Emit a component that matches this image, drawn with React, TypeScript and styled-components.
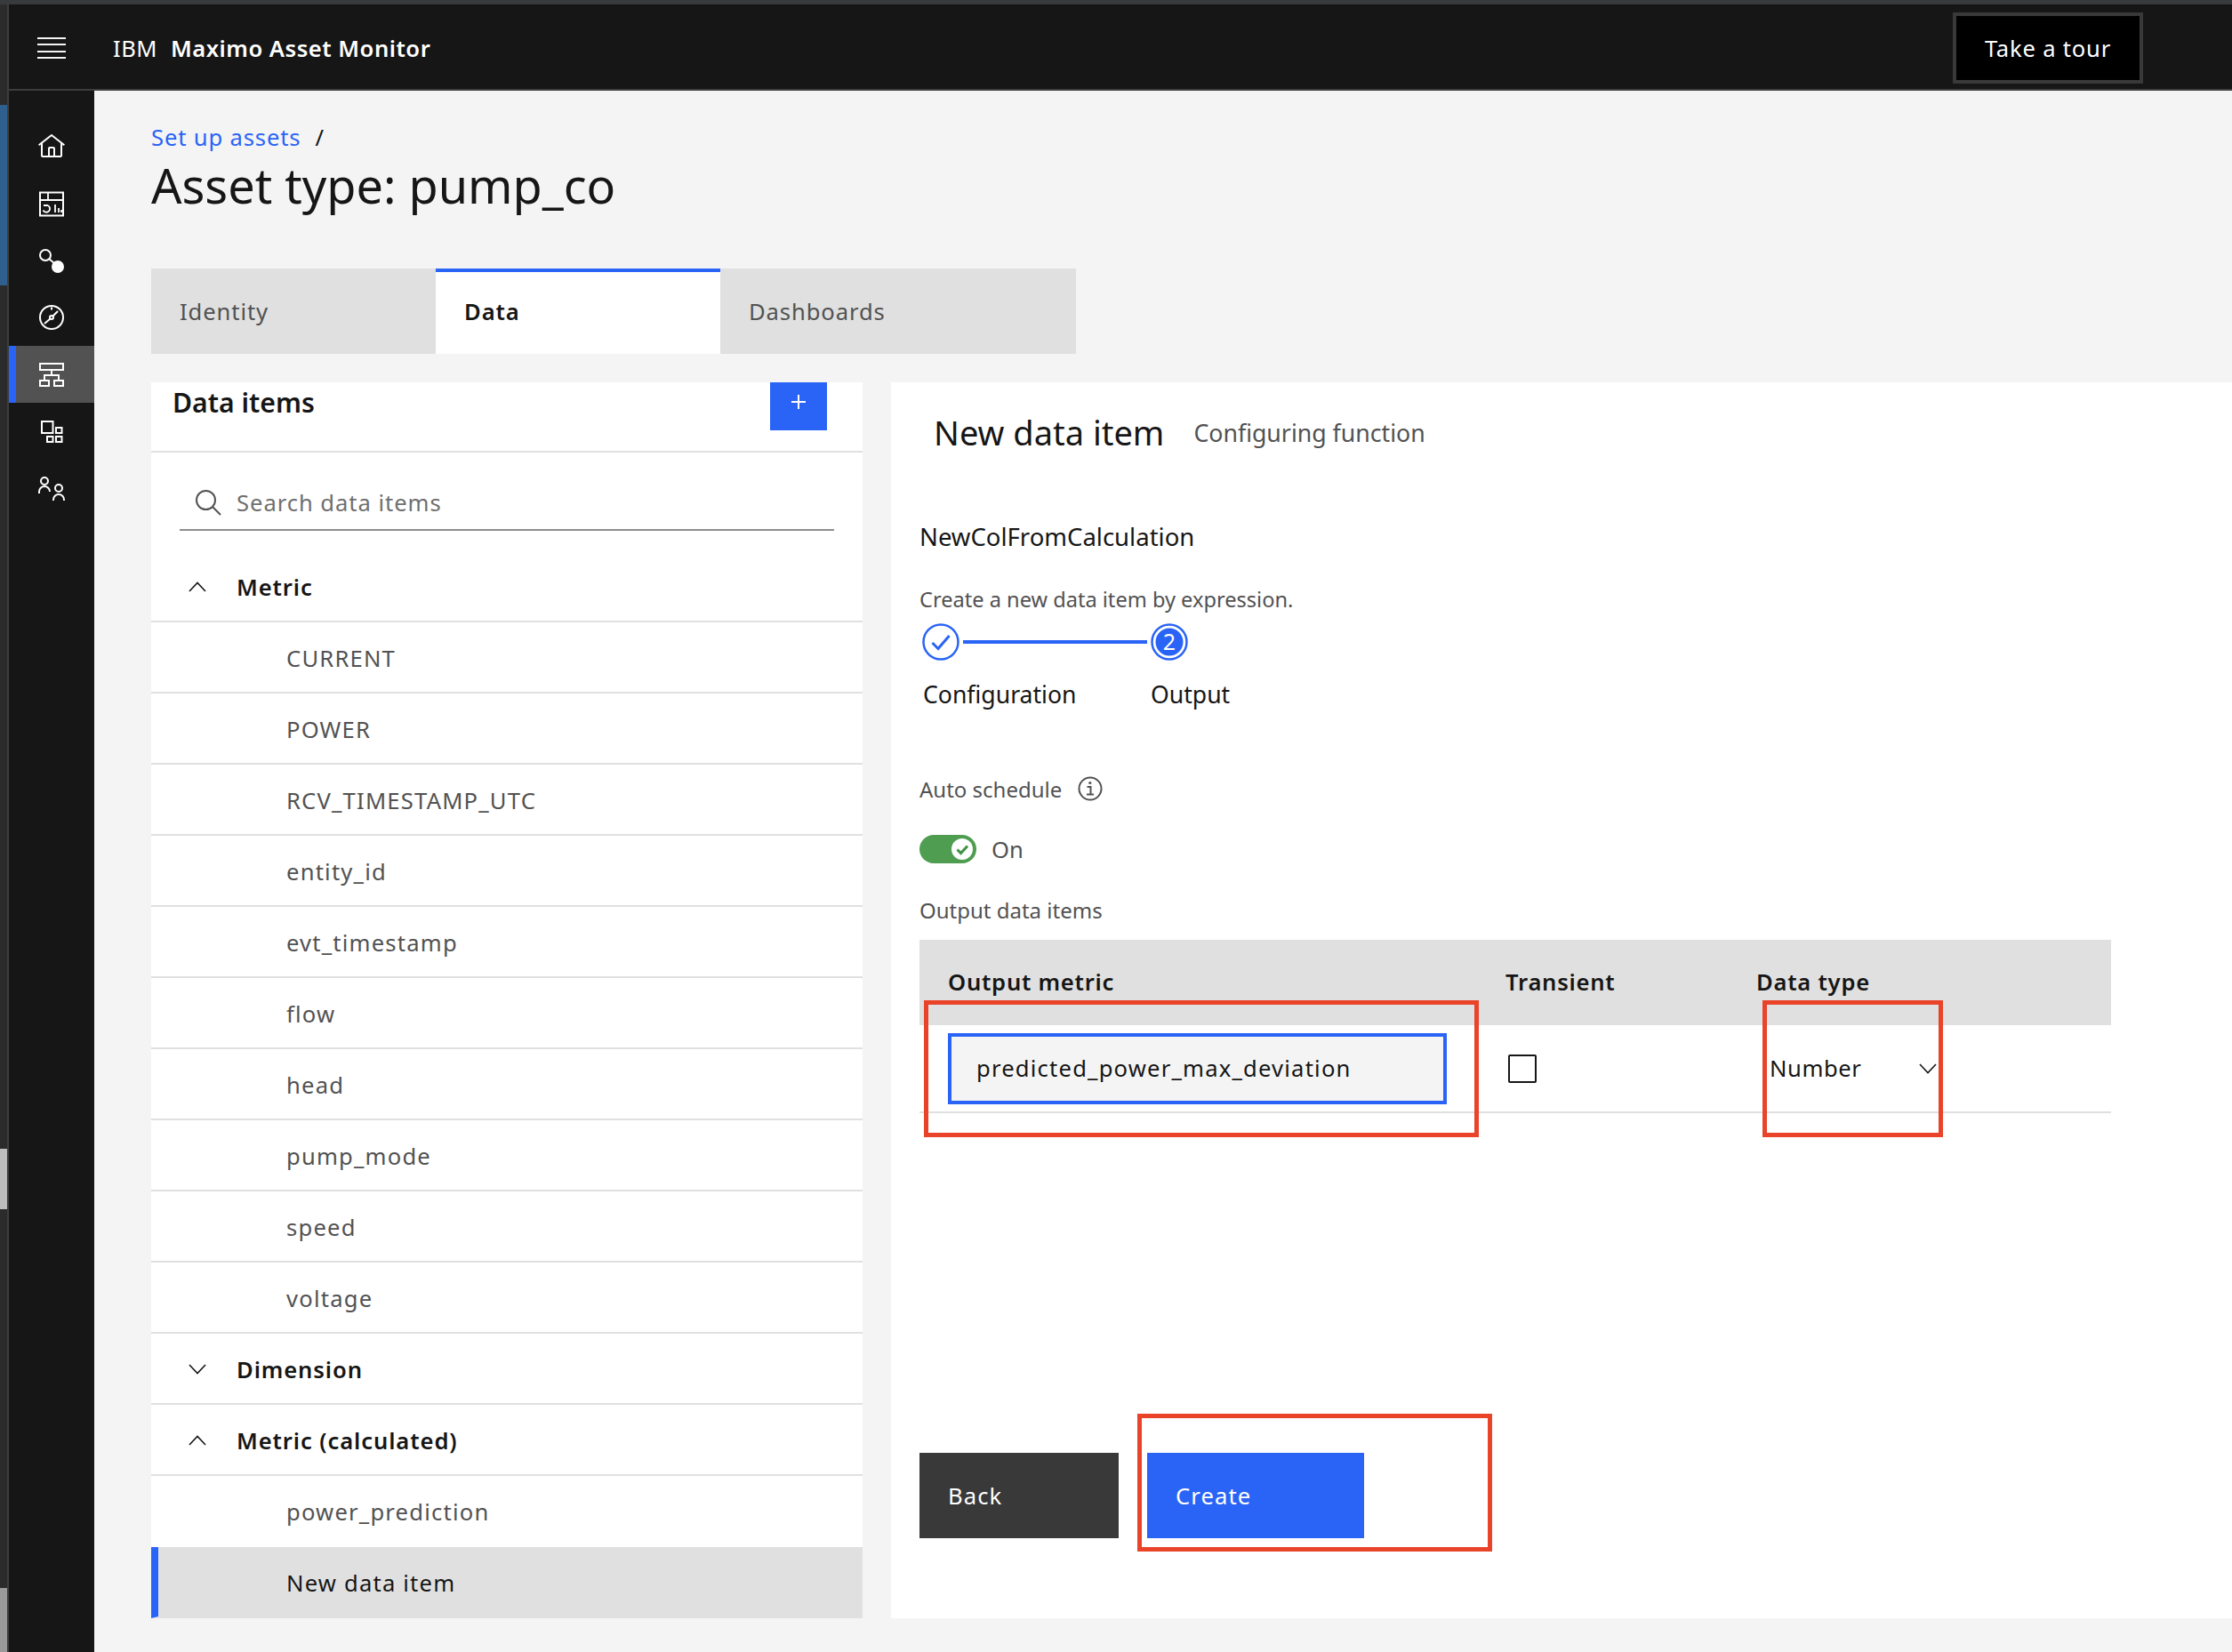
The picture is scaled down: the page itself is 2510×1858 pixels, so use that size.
import React from 'react';
import styled, { createGlobalStyle } from 'styled-components';

const GlobalStyle = createGlobalStyle`
  html, body {
    margin: 0;
    padding: 0;
    background: #f4f4f4;
    font-family: 'Noto Sans', 'Open Sans', sans-serif;
    color: #161616;
  }
  * { box-sizing: border-box; }
`;

const BLUE = '#2a64f6';

const Page = styled.div`
  width: 2510px;
  height: 1858px;
  display: flex;
  flex-direction: column;
  overflow: hidden;
`;

const TopStrip = styled.div`
  height: 5px;
  background: #393a3c;
`;

const Body = styled.div`
  flex: 1;
  display: flex;
  min-height: 0;
`;

const EdgeStrip = styled.div`
  width: 10px;
  display: flex;
  flex-direction: column;
  background: #2b2b2b;
  border-right: 2px solid #3d3d3d;
`;

const EdgeSegment = styled.div<{ $h: number; $c: string }>`
  height: ${(p) => p.$h}px;
  background: ${(p) => p.$c};
`;

const Column = styled.div`
  flex: 1;
  display: flex;
  flex-direction: column;
  min-width: 0;
`;

const Header = styled.header`
  height: 97px;
  background: #161616;
  border-bottom: 2px solid #3d3d3d;
  display: flex;
  align-items: center;
  padding: 3px 0 0 32px;
  color: #fff;
`;

const Hamburger = styled.div`
  width: 32px;
  height: 24px;
  display: flex;
  flex-direction: column;
  justify-content: space-between;
  margin-right: 53px;

  span {
    height: 2px;
    background: #f4f4f4;
  }
`;

const Brand = styled.div`
  font-size: 25.6px;
  letter-spacing: 0.5px;
  white-space: nowrap;

  b {
    font-weight: 600;
    margin-left: 15px;
  }
`;

const TourButton = styled.div`
  margin-left: auto;
  margin-right: 100px;
  width: 214px;
  height: 80px;
  background: #000;
  border: 4px solid #393939;
  display: flex;
  align-items: center;
  justify-content: center;
  font-size: 25.6px;
  letter-spacing: 0.8px;
  color: #fff;
`;

const Row = styled.div`
  flex: 1;
  display: flex;
  min-height: 0;
`;

const SideNav = styled.nav`
  width: 96px;
  background: #161616;
  padding-top: 31px;
  flex-shrink: 0;
`;

const NavItem = styled.div<{ $active?: boolean }>`
  height: 64px;
  display: flex;
  align-items: center;
  justify-content: center;
  color: #fff;
  background: ${(p) => (p.$active ? '#525252' : 'transparent')};
  border-left: 8px solid ${(p) => (p.$active ? BLUE : 'transparent')};
  padding-right: 8px;
`;

const Content = styled.main`
  flex: 1;
  padding: 32px 0 38px 64px;
  display: flex;
  flex-direction: column;
  min-width: 0;
`;

const Breadcrumb = styled.div`
  height: 40px;
  display: flex;
  align-items: center;
  font-size: 25.6px;
  color: #2a64f6;
  letter-spacing: 0.85px;

  i {
    font-style: normal;
    color: #161616;
    margin-left: 16px;
  }
`;

const Title = styled.h1`
  margin: 0;
  height: 70px;
  line-height: 68px;
  font-size: 54px;
  font-weight: 400;
`;

const Tabs = styled.div`
  display: flex;
  margin-top: 58px;
  height: 96px;
`;

const Tab = styled.div<{ $active?: boolean; $w: number }>`
  width: ${(p) => p.$w}px;
  padding: 0 0 3px 32px;
  display: flex;
  align-items: center;
  font-size: 25.6px;
  letter-spacing: 0.9px;
  background: ${(p) => (p.$active ? '#fff' : '#e0e0e0')};
  color: ${(p) => (p.$active ? '#161616' : '#525252')};
  font-weight: ${(p) => (p.$active ? 600 : 400)};
  border-top: 4px solid ${(p) => (p.$active ? BLUE : '#e0e0e0')};
`;

const Panels = styled.div`
  flex: 1;
  display: flex;
  gap: 32px;
  margin-top: 32px;
  min-height: 0;
`;

const LeftPanel = styled.section`
  width: 800px;
  background: #fff;
  flex-shrink: 0;
`;

const PanelHead = styled.div`
  height: 79px;
  border-bottom: 2px solid #e0e0e0;
  padding: 0 40px 0 24px;
  display: flex;
  justify-content: space-between;
  align-items: flex-start;
`;

const PanelTitle = styled.h2`
  margin: 0;
  font-size: 30.2px;
  line-height: 46px;
  font-weight: 600;
`;

const AddButton = styled.div`
  width: 64px;
  height: 54px;
  background: ${BLUE};
  color: #fff;
  display: flex;
  justify-content: center;
  padding-top: 13px;
`;

const Search = styled.div`
  margin: 0 32px;
  height: 88px;
  border-bottom: 2px solid #8d8d8d;
  padding: 26px 0 0 16px;
  display: flex;
  align-items: center;
  gap: 16px;
  font-size: 25.6px;
  letter-spacing: 0.95px;
  color: #6f6f6f;
`;

const List = styled.div`
  margin-top: 23px;
`;

const GroupRow = styled.div`
  height: 80px;
  border-bottom: 2px solid #e0e0e0;
  display: flex;
  align-items: center;
  padding: 2px 0 0 42px;
  gap: 34px;
  font-size: 25.6px;
  letter-spacing: 0.9px;
  font-weight: 600;
`;

const ItemRow = styled.div<{ $selected?: boolean; $flat?: boolean }>`
  height: 80px;
  border-bottom: 2px solid ${(p) => (p.$flat ? 'transparent' : '#e0e0e0')};
  display: flex;
  align-items: center;
  padding: 2px 0 0 ${(p) => (p.$selected ? 144 : 152)}px;
  font-size: 25.6px;
  letter-spacing: 1.2px;
  color: ${(p) => (p.$selected ? '#161616' : '#525252')};
  background: ${(p) => (p.$selected ? '#e0e0e0' : 'transparent')};
  border-left: ${(p) => (p.$selected ? `8px solid ${BLUE}` : '0')};
`;

const RightPanel = styled.section`
  flex: 1;
  background: #fff;
  position: relative;
  padding-left: 32px;
  min-width: 0;
`;

const RedBox = styled.div<{ $l: number; $t: number; $w: number; $h: number }>`
  position: absolute;
  left: ${(p) => p.$l}px;
  top: ${(p) => p.$t}px;
  width: ${(p) => p.$w}px;
  height: ${(p) => p.$h}px;
  border: 5px solid #e9442a;
`;

const FormHead = styled.div`
  margin: 26px 0 0 16px;
  height: 60px;
  display: flex;
  align-items: center;
  gap: 33px;
`;

const FormTitle = styled.h2`
  margin: 0;
  font-size: 38px;
  font-weight: 400;
`;

const FormSub = styled.span`
  font-size: 26.7px;
  color: #525252;
`;

const FunctionName = styled.div`
  margin-top: 68px;
  height: 40px;
  line-height: 40px;
  font-size: 27.5px;
`;

const Hint = styled.div`
  margin-top: 34px;
  height: 32px;
  line-height: 32px;
  font-size: 23.6px;
  color: #525252;
`;

const Stepper = styled.div`
  margin-top: 11px;
  height: 42px;
  display: flex;
  align-items: center;
  padding-left: 3px;
`;

const StepLine = styled.div`
  width: 207px;
  height: 4px;
  margin: 0 4px 0 4px;
  background: ${BLUE};
`;

const StepLabels = styled.div`
  margin-top: 20px;
  display: grid;
  grid-template-columns: 256px auto;
  justify-content: start;
  padding-left: 4px;
  font-size: 26.6px;
  height: 36px;
  line-height: 36px;
`;

const FieldLabel = styled.div<{ $top: number }>`
  margin-top: ${(p) => p.$top}px;
  height: 32px;
  padding-bottom: 4px;
  display: flex;
  align-items: center;
  gap: 18px;
  font-size: 24px;
  color: #525252;
`;

const ToggleRow = styled.div`
  margin-top: 34px;
  height: 32px;
  display: flex;
  align-items: center;
  gap: 17px;
  font-size: 25.6px;
  color: #525252;
`;

const ToggleTrack = styled.div`
  width: 64px;
  height: 32px;
  border-radius: 16px;
  background: #4f9d50;
  display: flex;
  align-items: center;
  justify-content: flex-end;
  padding-right: 3px;
`;

const Table = styled.div`
  margin-top: 16px;
  width: 1340px;
`;

const TableHead = styled.div`
  height: 96px;
  background: #e0e0e0;
  display: grid;
  grid-template-columns: 659px 282px 1fr;
  align-items: center;
  padding-bottom: 1px;
  font-size: 25.6px;
  letter-spacing: 0.75px;
  font-weight: 600;
`;

const HeadCell = styled.div<{ $pad?: number }>`
  padding-left: ${(p) => p.$pad || 0}px;
`;

const TableRow = styled.div`
  height: 99px;
  border-bottom: 2px solid #e0e0e0;
  display: grid;
  grid-template-columns: 659px 282px 1fr;
  align-items: center;
`;

const MetricInput = styled.div`
  margin-left: 32px;
  width: 561px;
  height: 80px;
  border: 4px solid ${BLUE};
  background: #f4f4f4;
  display: flex;
  align-items: center;
  padding-left: 28px;
  font-size: 25.6px;
  letter-spacing: 1.2px;
`;

const CheckBox = styled.div`
  margin-left: 3px;
  width: 32px;
  height: 32px;
  border: 2.5px solid #161616;
  border-radius: 2px;
`;

const SelectBox = styled.div`
  margin-left: 15px;
  width: 188px;
  display: flex;
  align-items: center;
  justify-content: space-between;
  font-size: 25.6px;
  letter-spacing: 0.6px;
`;

const Actions = styled.div`
  margin-top: 382px;
  display: flex;
  gap: 32px;
`;

const ActionButton = styled.div<{ $w: number; $primary?: boolean }>`
  width: ${(p) => p.$w}px;
  height: 96px;
  padding-left: 32px;
  display: flex;
  align-items: center;
  color: #fff;
  font-size: 25.6px;
  letter-spacing: 1.1px;
  background: ${(p) => (p.$primary ? BLUE : '#393939')};
`;

const Icon = ({ children, size = 32 }: { children: React.ReactNode; size?: number }) => (
  <svg width={size} height={size} viewBox="0 0 32 32" fill="none" stroke="currentColor" strokeWidth="2">
    {children}
  </svg>
);

const HomeIcon = () => (
  <Icon>
    <path
      stroke="none"
      fill="currentColor"
      d="M16.6123,2.2138a1.01,1.01,0,0,0-1.2427,0L1,13.4194l1.2427,1.5717L4,13.6209V26a2.0041,2.0041,0,0,0,2,2H26a2.0037,2.0037,0,0,0,2-2V13.63L29.7573,15,31,13.4282ZM18,26H14V18h4Zm2,0V18a2.0023,2.0023,0,0,0-2-2H14a2.002,2.002,0,0,0-2,2v8H6V12.0615l10-7.79,10,7.8005V26Z"
    />
  </Icon>
);

const DashboardIcon = () => (
  <Icon>
    <rect x="3" y="3.5" width="26" height="26" />
    <path d="M3 12h26M12 3.5v8.5M20 17v9M24 21v5M27 23v3" strokeWidth="1.8" />
    <path d="M7 18h4.5a4 4 0 1 1-5 5.5" strokeWidth="1.8" />
  </Icon>
);

const ConnectIcon = () => (
  <Icon>
    <circle cx="9" cy="10" r="6" />
    <path d="M13 14l6 5" />
    <circle cx="23" cy="23" r="7" fill="currentColor" stroke="none" />
  </Icon>
);

const CompassIcon = () => (
  <Icon>
    <circle cx="16" cy="16" r="13" />
    <circle cx="16" cy="16" r="2" />
    <path d="M17.5 14.5L23 9M14.5 17.5L8 23M16 4.5v3" />
  </Icon>
);

const HierarchyIcon = () => (
  <Icon>
    <rect x="3" y="4" width="26" height="7" />
    <rect x="3" y="23" width="10" height="6" />
    <rect x="19" y="23" width="10" height="6" />
    <path d="M16 11v6M8 23v-6h16v6" />
  </Icon>
);

const AppsIcon = () => (
  <Icon>
    <rect x="5" y="5" width="12.5" height="13" />
    <rect x="21" y="12" width="6.5" height="6" />
    <rect x="11" y="22" width="6.5" height="6" />
    <rect x="21" y="22" width="6.5" height="6" />
  </Icon>
);

const UsersIcon = () => (
  <Icon>
    <circle cx="8" cy="8" r="4" />
    <path d="M2 22v-2a6 6 0 0 1 6-6a6 6 0 0 1 6 6" />
    <circle cx="24" cy="16" r="4" />
    <path d="M18 30v-1a6 6 0 0 1 12 0v1" />
  </Icon>
);

const Chevron = ({ up }: { up?: boolean }) => (
  <svg width="20" height="12" viewBox="0 0 20 12" fill="none" stroke="#161616" strokeWidth="1.6">
    <path d={up ? 'M1 11l9-9.5 9 9.5' : 'M1 1l9 9.5L19 1'} />
  </svg>
);

const navIcons = [HomeIcon, DashboardIcon, ConnectIcon, CompassIcon, HierarchyIcon, AppsIcon, UsersIcon];
const metrics = [
  'CURRENT',
  'POWER',
  'RCV_TIMESTAMP_UTC',
  'entity_id',
  'evt_timestamp',
  'flow',
  'head',
  'pump_mode',
  'speed',
  'voltage',
];

const App = () => (
  <Page>
    <GlobalStyle />
    <TopStrip />
    <Body>
      <EdgeStrip>
        <EdgeSegment $h={113} $c="#2b2b2b" />
        <EdgeSegment $h={203} $c="#2f5f8f" />
        <EdgeSegment $h={971} $c="#2b2b2b" />
        <EdgeSegment $h={68} $c="#bdbdbd" />
        <EdgeSegment $h={426} $c="#2b2b2b" />
        <EdgeSegment $h={72} $c="#9a9a9a" />
      </EdgeStrip>
      <Column>
        <Header>
          <Hamburger>
            <span />
            <span />
            <span />
            <span />
          </Hamburger>
          <Brand>
            IBM<b>Maximo Asset Monitor</b>
          </Brand>
          <TourButton>Take a tour</TourButton>
        </Header>
        <Row>
          <SideNav>
            {navIcons.map((NavIcon, i) => (
              <NavItem key={i} $active={i === 4}>
                <NavIcon />
              </NavItem>
            ))}
          </SideNav>
          <Content>
            <Breadcrumb>
              Set up assets<i>/</i>
            </Breadcrumb>
            <Title>Asset type: pump_co</Title>
            <Tabs>
              <Tab $w={320}>Identity</Tab>
              <Tab $w={320} $active>
                Data
              </Tab>
              <Tab $w={400}>Dashboards</Tab>
            </Tabs>
            <Panels>
              <LeftPanel>
                <PanelHead>
                  <PanelTitle>Data items</PanelTitle>
                  <AddButton>
                    <svg width="18" height="18" viewBox="0 0 18 18" stroke="#fff" strokeWidth="2">
                      <path d="M9 1v16M1 9h16" />
                    </svg>
                  </AddButton>
                </PanelHead>
                <Search>
                  <svg width="32" height="32" viewBox="0 0 32 32" fill="none" stroke="#525252" strokeWidth="2">
                    <circle cx="13.5" cy="13.5" r="10.5" />
                    <path d="M21 21l9 9" />
                  </svg>
                  Search data items
                </Search>
                <List>
                  <GroupRow>
                    <Chevron up />
                    Metric
                  </GroupRow>
                  {metrics.map((m) => (
                    <ItemRow key={m}>{m}</ItemRow>
                  ))}
                  <GroupRow>
                    <Chevron />
                    Dimension
                  </GroupRow>
                  <GroupRow>
                    <Chevron up />
                    Metric (calculated)
                  </GroupRow>
                  <ItemRow $flat>power_prediction</ItemRow>
                  <ItemRow $selected $flat>
                    New data item
                  </ItemRow>
                </List>
              </LeftPanel>
              <RightPanel>
                <FormHead>
                  <FormTitle>New data item</FormTitle>
                  <FormSub>Configuring function</FormSub>
                </FormHead>
                <FunctionName>NewColFromCalculation</FunctionName>
                <Hint>Create a new data item by expression.</Hint>
                <Stepper>
                  <svg width="42" height="42" viewBox="0 0 42 42" fill="none">
                    <circle cx="21" cy="21" r="19.5" stroke={BLUE} strokeWidth="2.5" />
                    <path d="M11.5 22l6.5 6.5L30.5 14" stroke={BLUE} strokeWidth="3" />
                  </svg>
                  <StepLine />
                  <svg width="42" height="42" viewBox="0 0 42 42" fill="none">
                    <circle cx="21" cy="21" r="19.5" stroke={BLUE} strokeWidth="2.5" />
                    <circle cx="21" cy="21" r="15.5" fill={BLUE} />
                    <text x="21" y="29.5" textAnchor="middle" fontSize="25" fill="#fff">
                      2
                    </text>
                  </svg>
                </Stepper>
                <StepLabels>
                  <span>Configuration</span>
                  <span>Output</span>
                </StepLabels>
                <FieldLabel $top={74}>
                  Auto schedule
                  <svg width="28" height="28" viewBox="0 0 28 28" fill="none" stroke="#525252" strokeWidth="2">
                    <circle cx="14" cy="14" r="12.5" />
                    <path d="M10.5 12h4v8M10 20.5h8" />
                    <circle cx="13.8" cy="7.5" r="1.6" fill="#525252" stroke="none" />
                  </svg>
                </FieldLabel>
                <ToggleRow>
                  <ToggleTrack>
                    <svg width="26" height="26" viewBox="0 0 26 26" fill="none">
                      <circle cx="13" cy="13" r="12" fill="#fff" />
                      <path d="M7.5 13.5l4 4L19 9.5" stroke="#3f9142" strokeWidth="3" />
                    </svg>
                  </ToggleTrack>
                  On
                </ToggleRow>
                <FieldLabel $top={38}>Output data items</FieldLabel>
                <Table>
                  <TableHead>
                    <HeadCell $pad={32}>Output metric</HeadCell>
                    <HeadCell>Transient</HeadCell>
                    <HeadCell>Data type</HeadCell>
                  </TableHead>
                  <TableRow>
                    <MetricInput>predicted_power_max_deviation</MetricInput>
                    <CheckBox />
                    <SelectBox>
                      Number
                      <Chevron />
                    </SelectBox>
                  </TableRow>
                </Table>
                <Actions>
                  <ActionButton $w={224}>Back</ActionButton>
                  <ActionButton $w={244} $primary>
                    Create
                  </ActionButton>
                </Actions>
                <RedBox $l={37} $t={695} $w={624} $h={154} />
                <RedBox $l={980} $t={695} $w={203} $h={154} />
                <RedBox $l={277} $t={1160} $w={399} $h={155} />
              </RightPanel>
            </Panels>
          </Content>
        </Row>
      </Column>
    </Body>
  </Page>
);

export default App;
